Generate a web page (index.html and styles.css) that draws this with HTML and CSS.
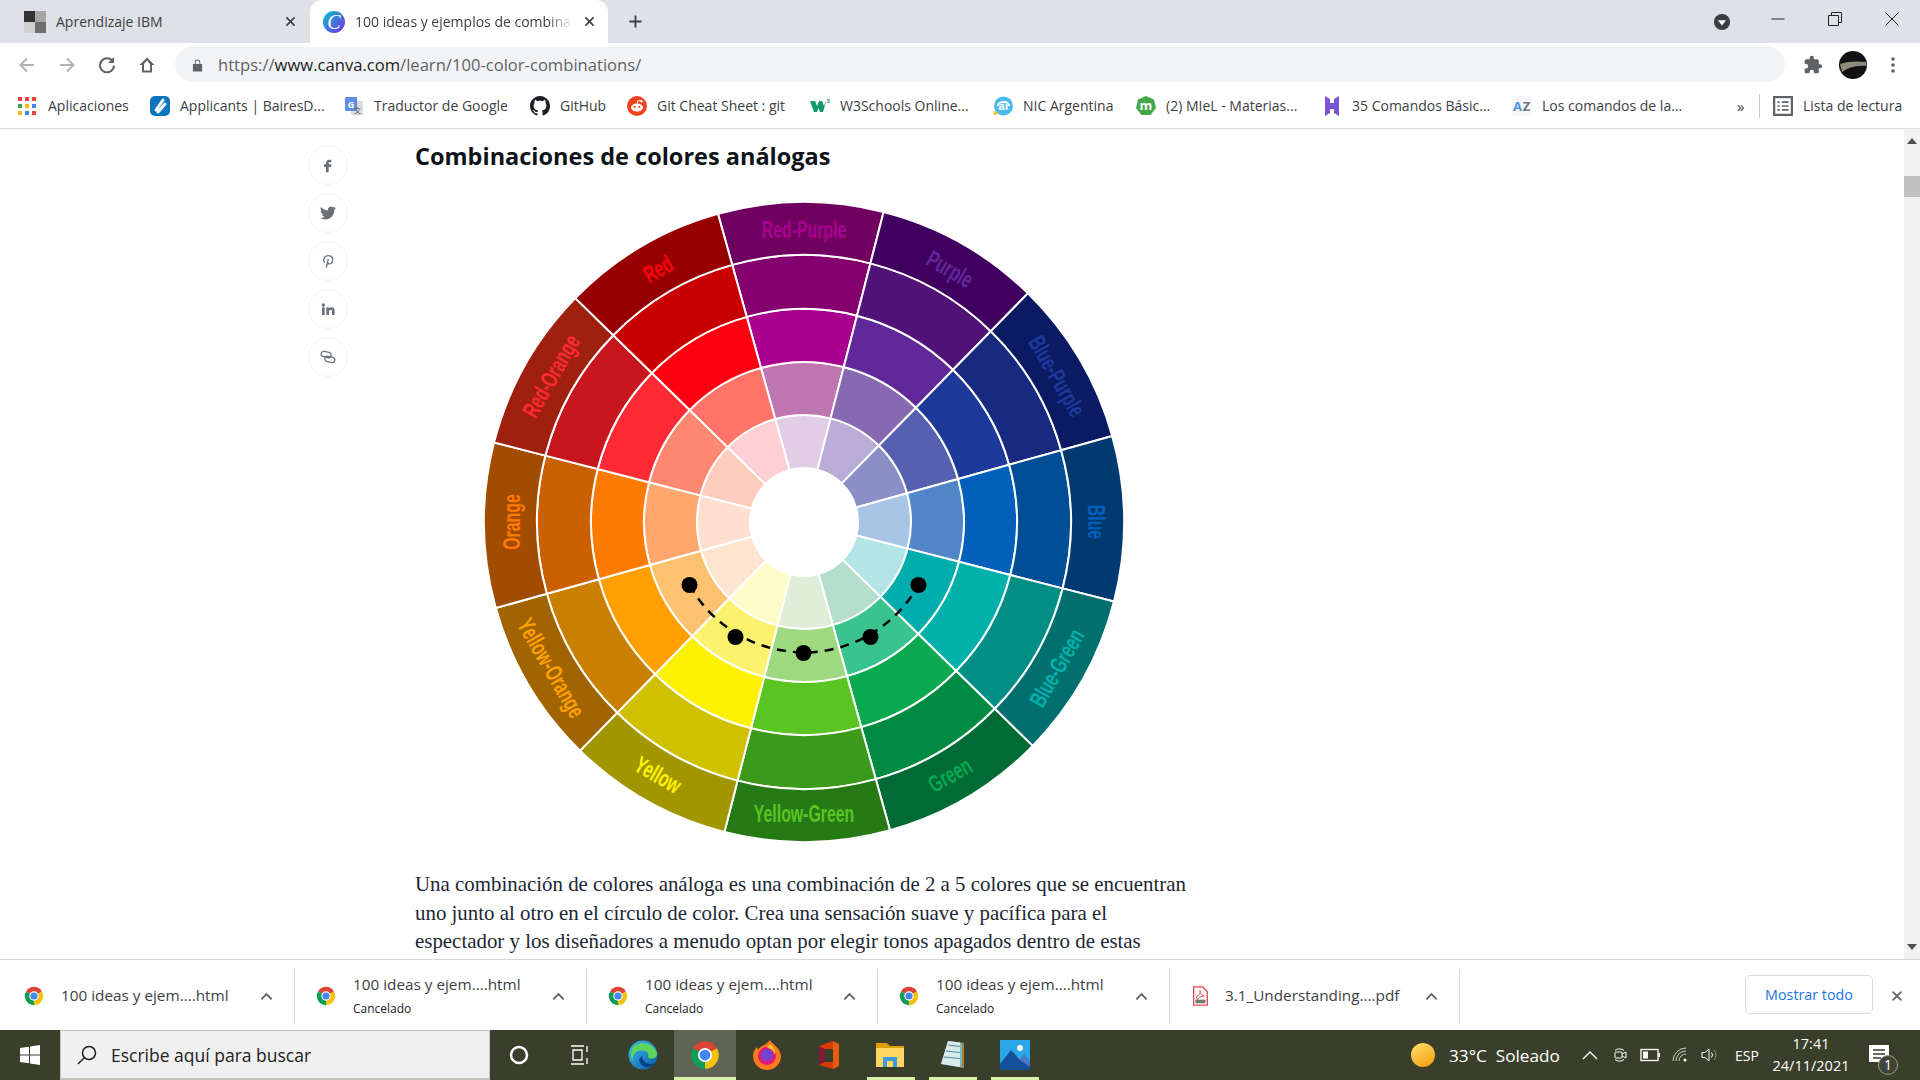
FILE: index.html
```html
<!DOCTYPE html>
<html lang="es">

<head>
	<meta charset="utf-8">
	<meta name="viewport" content="width=device-width, initial-scale=1.0">
	<title>100 ideas y ejemplos de combinaciones de colores</title>
	<link rel="stylesheet" href="styles.css">
</head>

<body>
	<svg class="defs" width="0" height="0">
		<symbol id="chrome" viewBox="0 0 24 24">
			<path fill="#db4437" d="M12 12L2.47 6.5A11 11 0 0 1 21.53 6.5Z" />
			<path fill="#f4c20d" d="M12 12L21.53 6.5A11 11 0 0 1 12 23Z" />
			<path fill="#0f9d58" d="M12 12L12 23A11 11 0 0 1 2.47 6.5Z" />
			<circle cx="12" cy="12" r="5.6" fill="#fff" />
			<circle cx="12" cy="12" r="4.3" fill="#4285f4" />
		</symbol>
		<symbol id="chev" viewBox="0 0 16 16">
			<path d="M2.5 11L8 5.5L13.5 11" fill="none" stroke="#5f6368" stroke-width="2" />
		</symbol>
		<symbol id="cross" viewBox="0 0 16 16">
			<path d="M3 3L13 13M13 3L3 13" fill="none" stroke="#3c4043" stroke-width="2" />
		</symbol>
	</svg>

	<header>
		<div class="tabstrip">
			<div class="tab">
				<svg class="favicon" viewBox="0 0 22 22">
					<rect width="11" height="11" fill="#333" />
					<rect x="11" width="11" height="11" fill="#a5a5a5" />
					<rect y="11" width="11" height="11" fill="#d0d0d0" />
					<rect x="11" y="11" width="11" height="11" fill="#6e6e6e" />
				</svg>
				<span class="tab_title">Aprendizaje IBM</span>
				<svg class="tab_close" viewBox="0 0 16 16"><use href="#cross" /></svg>
			</div>
			<div class="tab active">
				<svg class="favicon" viewBox="0 0 22 22">
					<defs>
						<linearGradient id="canva" x1="0" y1="0" x2="1" y2="1">
							<stop offset="0" stop-color="#00c4cc" />
							<stop offset="1" stop-color="#7d2ae8" />
						</linearGradient>
					</defs>
					<circle cx="11" cy="11" r="11" fill="url(#canva)" />
					<text class="canva_c" x="11" y="17.5">C</text>
				</svg>
				<span class="tab_title">100 ideas y ejemplos de combina</span>
				<svg class="tab_close" viewBox="0 0 16 16"><use href="#cross" /></svg>
			</div>
			<svg class="new_tab" viewBox="0 0 16 16">
				<path d="M8 1.5V14.5M1.5 8H14.5" stroke="#3c4043" stroke-width="2" />
			</svg>
			<svg class="tab_search" viewBox="0 0 20 20">
				<circle cx="10" cy="10" r="9" fill="#3c4043" />
				<path d="M5.5 8H14.5L10 14Z" fill="#fff" />
			</svg>
			<div class="winbtn">
				<svg viewBox="0 0 14 14"><path d="M0.5 7H13.5" stroke="#222" /></svg>
			</div>
			<div class="winbtn">
				<svg viewBox="0 0 14 14">
					<path d="M0.5 3.5H10.5V13.5H0.5ZM3.5 3.5V0.5H13.5V10.5H10.5" fill="none" stroke="#222" />
				</svg>
			</div>
			<div class="winbtn">
				<svg viewBox="0 0 14 14"><path d="M0.5 0.5L13.5 13.5M13.5 0.5L0.5 13.5" stroke="#222" /></svg>
			</div>
		</div>

		<div class="toolbar">
			<button class="toolbtn">
				<svg viewBox="0 0 20 20"><path d="M17 10H4M10 3.5L3.5 10L10 16.5" fill="none" stroke="#b0b3b8" stroke-width="2" /></svg>
			</button>
			<button class="toolbtn">
				<svg viewBox="0 0 20 20"><path d="M3 10H16M10 3.5L16.5 10L10 16.5" fill="none" stroke="#b0b3b8" stroke-width="2" /></svg>
			</button>
			<button class="toolbtn">
				<svg viewBox="0 0 20 20">
					<path d="M15.5 6A7 7 0 1 0 17 10.5" fill="none" stroke="#5f6368" stroke-width="2" />
					<path d="M17 2V8H11Z" fill="#5f6368" />
				</svg>
			</button>
			<button class="toolbtn">
				<svg viewBox="0 0 20 20"><path d="M10 2.5L2.5 10H5V17.5H15V10H17.5ZM7 15.5V9L10 5.5L13 9V15.5Z" fill="#5f6368" fill-rule="evenodd" /></svg>
			</button>
			<div class="omnibox">
				<svg class="lock" viewBox="0 0 12 14">
					<path d="M1 6H11V14H1ZM3 6V4A3 3 0 0 1 9 4V6" fill="#5f6368" />
					<path d="M4 6V4A2 2 0 0 1 8 4V6Z" fill="#f1f3f4" />
				</svg>
				<span class="url">https://<b>www.canva.com</b>/learn/100-color-combinations/</span>
			</div>
			<button class="toolbtn">
				<svg viewBox="0 0 24 24"><path fill="#5f6368" d="M20.5 11H19V7c0-1.1-.9-2-2-2h-4V3.5a2.5 2.5 0 0 0-5 0V5H4c-1.1 0-2 .9-2 2v3.8h1.5a2.7 2.7 0 0 1 0 5.4H2V20c0 1.1.9 2 2 2h3.8v-1.5a2.7 2.7 0 0 1 5.4 0V22H17c1.1 0 2-.9 2-2v-4h1.5a2.5 2.5 0 0 0 0-5z" /></svg>
			</button>
			<button class="toolbtn">
				<svg class="avatar" viewBox="0 0 28 28">
					<circle cx="14" cy="14" r="14" fill="#111" />
					<path d="M1 13C9 10 19 10 27 11L27.5 15C18 14 10 16 3 21Z" fill="#8f8c7c" />
				</svg>
			</button>
			<button class="toolbtn">
				<svg viewBox="0 0 20 20">
					<circle cx="10" cy="4" r="1.8" fill="#5f6368" />
					<circle cx="10" cy="10" r="1.8" fill="#5f6368" />
					<circle cx="10" cy="16" r="1.8" fill="#5f6368" />
				</svg>
			</button>
		</div>

		<nav class="bookmarks">
			<a class="bookmark">
				<svg viewBox="0 0 18 18">
					<rect width="4" height="4" fill="#ea4335" /><rect x="7" width="4" height="4" fill="#ea4335" /><rect x="14" width="4" height="4" fill="#ea4335" />
					<rect y="7" width="4" height="4" fill="#34a853" /><rect x="7" y="7" width="4" height="4" fill="#fbbc05" /><rect x="14" y="7" width="4" height="4" fill="#4285f4" />
					<rect y="14" width="4" height="4" fill="#fbbc05" /><rect x="7" y="14" width="4" height="4" fill="#4285f4" /><rect x="14" y="14" width="4" height="4" fill="#ea4335" />
				</svg>
				Aplicaciones
			</a>
			<a class="bookmark">
				<svg viewBox="0 0 20 20">
					<rect width="20" height="20" rx="5" fill="#0a75bd" />
					<path d="M6 14L13 4M8 16L15 8" stroke="#fff" stroke-width="3" stroke-linecap="round" />
				</svg>
				Applicants | BairesD...
			</a>
			<a class="bookmark">
				<svg viewBox="0 0 20 20">
					<rect x="7" y="5" width="12" height="14" fill="#d9dde3" />
					<rect x="1" y="1" width="12" height="14" rx="1" fill="#5d8fe6" />
					<text class="glyph_g" x="7" y="12">G</text>
					<text class="glyph_x" x="13.5" y="16.5">文</text>
				</svg>
				Traductor de Google
			</a>
			<a class="bookmark">
				<svg viewBox="0 0 16 16"><path fill="#1b1f23" d="M8 0C3.58 0 0 3.58 0 8c0 3.54 2.29 6.53 5.47 7.59.4.07.55-.17.55-.38 0-.19-.01-.82-.01-1.49-2.01.37-2.53-.49-2.69-.94-.09-.23-.48-.94-.82-1.13-.28-.15-.68-.52-.01-.53.63-.01 1.08.58 1.23.82.72 1.21 1.87.87 2.33.66.07-.52.28-.87.51-1.07-1.78-.2-3.64-.89-3.64-3.95 0-.87.31-1.59.82-2.15-.08-.2-.36-1.02.08-2.12 0 0 .67-.21 2.2.82.64-.18 1.32-.27 2-.27s1.36.09 2 .27c1.53-1.04 2.2-.82 2.2-.82.44 1.1.16 1.92.08 2.12.51.56.82 1.27.82 2.15 0 3.07-1.87 3.75-3.65 3.95.29.25.54.73.54 1.48 0 1.07-.01 1.93-.01 2.2 0 .21.15.46.55.38A8.01 8.01 0 0 0 16 8c0-4.42-3.58-8-8-8z" /></svg>
				GitHub
			</a>
			<a class="bookmark">
				<svg viewBox="0 0 20 20">
					<circle cx="10" cy="10" r="10" fill="#f0421c" />
					<ellipse cx="10" cy="11.5" rx="6" ry="4" fill="#fff" />
					<circle cx="7.7" cy="11" r="1.1" fill="#f0421c" />
					<circle cx="12.3" cy="11" r="1.1" fill="#f0421c" />
					<path d="M10 8L11 4.5L14 5.2" fill="none" stroke="#fff" />
					<circle cx="14.5" cy="5.2" r="1.2" fill="#fff" />
				</svg>
				Git Cheat Sheet : git
			</a>
			<a class="bookmark">
				<svg viewBox="0 0 20 20">
					<path d="M0 5H5L7 10L9 5H12L14 10L16 5V6L13 16H10L8.5 12L7 16H4Z" fill="#119a6b" />
					<text class="glyph_3" x="16.5" y="7">3</text>
				</svg>
				W3Schools Online...
			</a>
			<a class="bookmark">
				<svg viewBox="0 0 20 20">
					<circle cx="10.5" cy="10" r="9.5" fill="#4cb9ee" />
					<path d="M5 10A5.5 4 0 0 1 16 10" fill="none" stroke="#fff" stroke-width="2" />
					<text class="glyph_ar" x="11" y="14">ar</text>
					<circle cx="2.5" cy="17" r="2" fill="#f5c518" />
				</svg>
				NIC Argentina
			</a>
			<a class="bookmark">
				<svg viewBox="0 0 20 20">
					<path d="M10 0L18 3.5L20 12L14.5 19H5.5L0 12L2 3.5Z" fill="#45a848" />
					<text class="glyph_m" x="10" y="14">m</text>
				</svg>
				(2) MIeL - Materias...
			</a>
			<a class="bookmark">
				<svg viewBox="0 0 20 20">
					<path d="M3 0L8 3V7H12V3L17 0V20L12 17V13H8V17L3 20Z" fill="#7a55d8" />
				</svg>
				35 Comandos Básic...
			</a>
			<a class="bookmark">
				<svg viewBox="0 0 20 20">
					<rect width="20" height="20" fill="#f6f7f9" />
					<text class="glyph_a" x="5.5" y="15">A</text>
					<text class="glyph_z" x="14.5" y="15">Z</text>
				</svg>
				Los comandos de la...
			</a>
			<span class="more">»</span>
			<span class="bm_sep"></span>
			<a class="bookmark">
				<svg viewBox="0 0 18 18">
					<rect x="1" y="1" width="16" height="16" fill="none" stroke="#5f6368" stroke-width="2" />
					<path d="M4 5.5H6M8 5.5H14M4 9H6M8 9H14M4 12.5H6M8 12.5H14" stroke="#5f6368" stroke-width="1.5" />
				</svg>
				Lista de lectura
			</a>
		</nav>
	</header>

	<main>
		<div class="page">
			<aside class="share">
				<a class="share_btn"><svg viewBox="0 0 24 24"><path d="M14 8h3V4h-3c-3 0-5 2-5 5v2H6v4h3v8h4v-8h3.5l.5-4h-4V9c0-.6.4-1 1-1z" /></svg></a>
				<a class="share_btn"><svg viewBox="0 0 24 24"><path d="M23.95 4.57a10 10 0 0 1-2.82.77 4.96 4.96 0 0 0 2.16-2.72c-.95.55-2 .95-3.12 1.18a4.92 4.92 0 0 0-8.38 4.48C7.69 8.1 4.07 6.13 1.64 3.16a4.82 4.82 0 0 0-.67 2.47c0 1.71.87 3.21 2.19 4.1a4.9 4.9 0 0 1-2.23-.61v.06a4.92 4.92 0 0 0 3.95 4.83 5 5 0 0 1-2.21.08 4.94 4.94 0 0 0 4.6 3.42A9.87 9.87 0 0 1 0 19.54a13.94 13.94 0 0 0 7.55 2.21c9.05 0 14-7.5 14-13.98 0-.21 0-.42-.02-.63a9.94 9.94 0 0 0 2.46-2.55z" /></svg></a>
				<a class="share_btn"><svg viewBox="0 0 24 24"><path class="line" d="M9.5 22L12.5 9M7 14.5C4 11 6 4 12.5 4S20 9 18.5 13C17 17 12.5 17 11 14.5" /></svg></a>
				<a class="share_btn"><svg viewBox="0 0 24 24"><path d="M4.98 3.5a2.5 2.5 0 1 1 0 5 2.5 2.5 0 0 1 0-5zM3 9.5h4V21H3zM9.5 9.5h3.8v1.6c.6-1 1.9-1.9 3.8-1.9 4 0 4.9 2.6 4.9 6V21h-4v-5c0-1.3 0-3-1.8-3s-2.7 1.4-2.7 2.9V21h-4z" /></svg></a>
				<a class="share_btn"><svg viewBox="0 0 24 24">
					<g transform="rotate(12 12 12)">
						<rect class="line" x="1" y="5" width="15" height="8" rx="4" />
						<rect class="line" x="8" y="11" width="15" height="8" rx="4" />
					</g>
				</svg></a>
			</aside>

			<article>
				<h2>Combinaciones de colores análogas</h2>
				<svg id="wheel" class="wheel" viewBox="0 0 640 640"></svg>
				<p>Una combinación de colores análoga es una combinación de 2 a 5 colores que se encuentran<br>
					uno junto al otro en el círculo de color. Crea una sensación suave y pacífica para el<br>
					espectador y los diseñadores a menudo optan por elegir tonos apagados dentro de estas</p>
			</article>
		</div>

		<div class="scrollbar">
			<span class="arrow_up"></span>
			<span class="thumb"></span>
			<span class="arrow_down"></span>
		</div>
	</main>

	<section class="downloads">
		<div class="dl_items">
			<div class="dl_item first">
				<svg class="dl_icon"><use href="#chrome" /></svg>
				<div class="dl_text"><span>100 ideas y ejem....html</span></div>
				<svg class="dl_chev"><use href="#chev" /></svg>
			</div>
			<div class="dl_item">
				<svg class="dl_icon"><use href="#chrome" /></svg>
				<div class="dl_text"><span>100 ideas y ejem....html</span><small>Cancelado</small></div>
				<svg class="dl_chev"><use href="#chev" /></svg>
			</div>
			<div class="dl_item">
				<svg class="dl_icon"><use href="#chrome" /></svg>
				<div class="dl_text"><span>100 ideas y ejem....html</span><small>Cancelado</small></div>
				<svg class="dl_chev"><use href="#chev" /></svg>
			</div>
			<div class="dl_item">
				<svg class="dl_icon"><use href="#chrome" /></svg>
				<div class="dl_text"><span>100 ideas y ejem....html</span><small>Cancelado</small></div>
				<svg class="dl_chev"><use href="#chev" /></svg>
			</div>
			<div class="dl_item">
				<svg class="dl_icon pdf" viewBox="0 0 20 22">
					<path d="M3 1H13L18 6V21H3Z" fill="#fff" stroke="#e5484d" stroke-width="1.5" />
					<path d="M6 12C9 11 11 7 10 5C9.5 7 11 10 15 11C11 11 8 13 7 15Z" fill="none" stroke="#e5484d" />
					<rect x="5" y="15" width="11" height="4" fill="#777" />
				</svg>
				<div class="dl_text"><span>3.1_Understanding....pdf</span></div>
				<svg class="dl_chev"><use href="#chev" /></svg>
			</div>
		</div>
		<button class="show_all">Mostrar todo</button>
		<svg class="dl_close" viewBox="0 0 16 16">
			<path d="M3 3L13 13M13 3L3 13" fill="none" stroke="#5f6368" stroke-width="2" />
		</svg>
	</section>

	<footer class="taskbar">
		<div class="start">
			<svg viewBox="0 0 20 20">
				<path d="M0 3L9 1.7V9.5H0ZM10 1.5L20 0V9.5H10ZM0 10.5H9V18.3L0 17ZM10 10.5H20V20L10 18.5Z" fill="#fff" />
			</svg>
		</div>
		<div class="search">
			<svg viewBox="0 0 20 20">
				<circle cx="12" cy="8" r="6.5" fill="none" stroke="#222" stroke-width="1.5" />
				<path d="M7.5 12.5L1 19" stroke="#222" stroke-width="1.5" />
			</svg>
			Escribe aquí para buscar
		</div>

		<div class="tb_btn narrow">
			<svg viewBox="0 0 20 20"><circle cx="10" cy="10" r="8" fill="none" stroke="#fff" stroke-width="2.5" /></svg>
		</div>
		<div class="tb_btn wide">
			<svg viewBox="0 0 20 20">
				<path d="M1 1H14M1 19H14M3 5H12V15H3ZM17 1V7M17 13V19" fill="none" stroke="#fff" stroke-width="1.3" />
			</svg>
		</div>
		<div class="tb_btn">
			<svg class="big" viewBox="0 0 30 30">
				<defs>
					<linearGradient id="edge" x1="0" y1="0" x2="1" y2="1">
						<stop offset="0" stop-color="#35c1f1" />
						<stop offset="1" stop-color="#0c59a4" />
					</linearGradient>
				</defs>
				<circle cx="15" cy="15" r="14.5" fill="url(#edge)" />
				<path d="M4 9C8 1 24 0 29 13C30 19 22 20 20 17C22 12 15 9 10 11C6 13 4 17 5 21C2 18 3 12 4 9Z" fill="#5fd35f" />
				<path d="M14 16C14 22 21 26 27 23C22 30 12 28 11 19Z" fill="#0b3f87" />
			</svg>
		</div>
		<div class="tb_btn running current">
			<svg class="big"><use href="#chrome" /></svg>
		</div>
		<div class="tb_btn">
			<svg class="big" viewBox="0 0 30 30">
				<path d="M18 0C20 4 28 7 29 16A14 14 0 0 1 1 16C1 12 3 9 5 7L6 10C9 5 15 5 18 0Z" fill="#ff7a1a" />
				<circle cx="15" cy="16" r="9" fill="#e3177a" />
				<circle cx="15" cy="15" r="6" fill="#7443cc" />
				<path d="M18 4C22 7 24 11 23 15C21 9 17 8 15 8Z" fill="#ffc22e" />
			</svg>
		</div>
		<div class="tb_btn">
			<svg class="big" viewBox="0 0 30 30">
				<path d="M5 6L19 1V29L5 25Z" fill="#d83b01" />
				<path d="M19 1L25 4V26L19 29Z" fill="#e85d12" />
				<path d="M5 6L11 9V22L5 25Z" fill="#7f1c3a" />
				<path d="M11 9H19V22H11Z" fill="#393f2a" />
			</svg>
		</div>
		<div class="tb_btn running">
			<svg class="big" viewBox="0 0 30 30">
				<path d="M0 3H11L14 6H28V25H0Z" fill="#e0a100" />
				<path d="M0 8H28V27H0Z" fill="#ffd75e" />
				<path d="M7 27V17H21V27H17V21H11V27Z" fill="#3d9ae2" />
			</svg>
		</div>
		<div class="tb_btn running">
			<svg class="big" viewBox="0 0 30 30">
				<path d="M10 1L26 3L26 28L3 24Z" fill="#7fb6bb" />
				<path d="M10 1L22 2.5L22 27L3 24Z" fill="#d8eaec" />
				<path d="M10 5L22 6.5M8 11L22 12.5M6 17L22 18.5" stroke="#4a8c93" />
				<path d="M24 3H26V28H24Z" fill="#a6803a" />
			</svg>
		</div>
		<div class="tb_btn running">
			<svg class="big" viewBox="0 0 30 30">
				<rect width="30" height="30" fill="#2aa7ea" />
				<path d="M0 24L11 10L20 20L24 15L30 21V30H0Z" fill="#14509a" />
				<path d="M20 20L24 15L30 21V27Z" fill="#4b77c8" />
				<circle cx="20" cy="8" r="3" fill="#fff" />
			</svg>
		</div>

		<div class="tray">
			<span class="sun"></span>
			<span class="weather">33°C&nbsp; Soleado</span>
			<svg viewBox="0 0 16 16"><path d="M1 12L8 5L15 12" fill="none" stroke="#fff" stroke-width="1.3" /></svg>
			<svg viewBox="0 0 16 16">
				<path d="M3 3.5A7 7 0 0 1 12 3.5M3 12.5A7 7 0 0 0 12 12.500" fill="none" stroke="#fff" />
				<rect x="3" y="5" width="7" height="6" rx="1" fill="none" stroke="#fff" />
				<path d="M10 7L14 5V11L10 9" fill="none" stroke="#fff" />
			</svg>
			<svg viewBox="0 0 20 16">
				<rect x="1" y="2.5" width="17" height="11" fill="none" stroke="#fff" stroke-width="1.3" />
				<rect x="3" y="4.5" width="5" height="7" fill="#fff" />
				<rect x="18.5" y="6" width="1.5" height="4" fill="#fff" />
			</svg>
			<svg viewBox="0 0 16 16">
				<path d="M1 14A13 13 0 0 1 14 1M4 14A10 10 0 0 1 14 4M7 14A7 7 0 0 1 14 7" fill="none" stroke="#cfd1c9" />
				<circle cx="13" cy="13" r="1.5" fill="#fff" />
			</svg>
			<svg viewBox="0 0 16 16">
				<path d="M1 5.5H4L8 2V14L4 10.5H1Z" fill="none" stroke="#fff" />
				<path d="M10.5 5.5A4 4 0 0 1 10.5 10.5" fill="none" stroke="#fff" />
				<path d="M13 3A8 8 0 0 1 13 13" fill="none" stroke="#8b8e80" />
			</svg>
			<span class="lang">ESP</span>
			<span class="clock">17:41<br>24/11/2021</span>
			<span class="notif">
				<svg viewBox="0 0 20 20">
					<path d="M0 0H20V17H0Z" fill="#fff" />
					<path d="M4 5H16M4 9H16M4 13H12" stroke="#393f2a" stroke-width="1.3" />
				</svg>
				<span class="badge">1</span>
			</span>
		</div>
	</footer>

	<script src="wheel.js"></script>
</body>

</html>
```

FILE: styles.css
```css
* {
	margin: 0;
	box-sizing: border-box;
}

html,
body {
	width: 1920px;
	height: 1080px;
	overflow: hidden;
}

body {
	display: flex;
	flex-direction: column;
	font-family: "Open Sans", "Noto Sans", sans-serif;
	color: #3c4043;
	background: #fff;
}

.defs {
	position: absolute;
}

svg {
	display: block;
	flex: none;
}

button {
	border: 0;
	background: none;
	padding: 0;
	font-family: inherit;
}

/* tabs */
.tabstrip {
	height: 43px;
	background: #dee1e6;
	display: flex;
	align-items: center;
}

.tab {
	height: 43px;
	width: 310px;
	padding: 0 13px 0 24px;
	display: flex;
	align-items: center;
	font-size: 14px;
}

.tab .favicon {
	width: 22px;
	height: 22px;
	margin-right: 10px;
}

.tab_title {
	flex: 1;
	overflow: hidden;
	white-space: nowrap;
}

.tab_close {
	width: 13px;
	height: 13px;
	margin-left: 10px;
}

.tab.active {
	width: 298px;
	padding: 0 12px 0 13px;
	background: #fff;
	border-radius: 12px 12px 0 0;
}

.tab.active .tab_title {
	-webkit-mask-image: linear-gradient(to right, #000 88%, transparent);
	mask-image: linear-gradient(to right, #000 88%, transparent);
}

.canva_c {
	font: italic 20px "Liberation Serif", serif;
	fill: #fff;
	text-anchor: middle;
}

.new_tab {
	width: 15px;
	height: 15px;
	margin-left: 20px;
}

.tab_search {
	width: 18px;
	height: 18px;
	margin-left: auto;
	margin-right: 18px;
}

.winbtn {
	width: 57px;
	height: 43px;
	padding-bottom: 6px;
	display: flex;
	align-items: center;
	justify-content: center;
}

.winbtn svg {
	width: 14px;
	height: 14px;
}

/* toolbar */
.toolbar {
	height: 43px;
	padding: 0 7px;
	display: flex;
	align-items: center;
}

.toolbtn {
	width: 40px;
	height: 36px;
	display: flex;
	align-items: center;
	justify-content: center;
	flex: none;
}

.toolbtn svg {
	width: 20px;
	height: 20px;
}

.toolbtn .avatar {
	width: 28px;
	height: 28px;
}

.omnibox {
	flex: 1;
	height: 35px;
	margin: 0 8px;
	padding-left: 17px;
	border-radius: 18px;
	background: #f1f3f4;
	display: flex;
	align-items: center;
}

.lock {
	width: 11px;
	height: 14px;
	margin-right: 15px;
}

.url {
	font-size: 16.6px;
	color: #5f6368;
}

.url b {
	font-weight: 400;
	color: #202124;
}

/* bookmarks */
.bookmarks {
	height: 43px;
	padding: 0 0 3px 18px;
	border-bottom: 1px solid #dadce0;
	display: grid;
	grid-template-columns: 132px 194px 186px 97px 183px 183px 143px 186px 190px 225px 22px 14px 1fr;
	align-items: center;
	font-size: 14px;
	white-space: nowrap;
}

.bookmark {
	display: flex;
	align-items: center;
	gap: 10px;
}

.bookmark svg {
	width: 20px;
	height: 20px;
}

.bookmark:first-child {
	gap: 12px;
}

.bookmark:first-child svg {
	width: 18px;
	height: 18px;
}

.more {
	font-size: 15px;
}

.bm_sep {
	width: 1px;
	height: 24px;
	background: #c8cacd;
}

.glyph_g {
	font: bold 9px "Open Sans", sans-serif;
	fill: #fff;
	text-anchor: middle;
}

.glyph_x {
	font: 7px "Noto Sans CJK SC", sans-serif;
	fill: #555;
	text-anchor: middle;
}

.glyph_3 {
	font: bold 6px "Open Sans", sans-serif;
	fill: #119a6b;
}

.glyph_ar {
	font: bold 11px "Open Sans", sans-serif;
	fill: #fff;
	text-anchor: middle;
}

.glyph_m {
	font: bold 13px "Open Sans", sans-serif;
	fill: #fff;
	text-anchor: middle;
}

.glyph_a {
	font: bold 13px "Open Sans", sans-serif;
	fill: #4d94ee;
	text-anchor: middle;
}

.glyph_z {
	font: bold 13px "Open Sans", sans-serif;
	fill: #6b7480;
	text-anchor: middle;
}

/* page */
main {
	height: 830px;
	display: flex;
	overflow: hidden;
}

.page {
	flex: 1;
	display: flex;
	padding-left: 308px;
	gap: 67px;
}

.share {
	width: 40px;
	padding-top: 16px;
	display: flex;
	flex-direction: column;
	gap: 8px;
}

.share_btn {
	width: 40px;
	height: 40px;
	border: 1px solid #f1f1f3;
	border-radius: 50%;
	display: flex;
	align-items: center;
	justify-content: center;
}

.share_btn svg {
	width: 16px;
	height: 16px;
	fill: #6b7178;
}

.share_btn .line {
	fill: none;
	stroke: #6b7178;
	stroke-width: 2;
}

article {
	width: 777px;
	padding-top: 11px;
}

h2 {
	font-size: 23.5px;
	line-height: 33px;
	font-weight: 700;
	color: #0e1318;
}

.wheel {
	width: 640px;
	height: 640px;
	margin: 29px auto 28px;
	overflow: visible;
}

.wheel_label {
	font: bold 24px "Liberation Sans", sans-serif;
	text-anchor: middle;
	dominant-baseline: central;
}

p {
	font-family: "Liberation Serif", serif;
	font-size: 20.9px;
	line-height: 28.7px;
	color: #1b2733;
	white-space: nowrap;
}

.scrollbar {
	width: 16px;
	background: #f1f1f1;
	display: flex;
	flex-direction: column;
	align-items: center;
}

.arrow_up {
	margin-top: 9px;
	border: 5px solid transparent;
	border-top: 0;
	border-bottom: 6px solid #505050;
}

.thumb {
	width: 16px;
	height: 21px;
	margin-top: 32px;
	background: #c1c1c1;
}

.arrow_down {
	margin-top: auto;
	margin-bottom: 9px;
	border: 5px solid transparent;
	border-bottom: 0;
	border-top: 6px solid #505050;
}

/* downloads bar */
.downloads {
	height: 71px;
	padding: 9px 16px 7px 0;
	border-top: 1px solid #d5d6d8;
	display: flex;
	align-items: center;
}

.dl_items {
	height: 55px;
	display: grid;
	grid-template-columns: 295px 292px 291px 292px 290px;
}

.dl_item {
	display: flex;
	align-items: center;
	padding: 0 20px 0 21px;
	border-right: 1px solid #d5d6d8;
	font-size: 15.3px;
}

.dl_item.first {
	padding-left: 24px;
}

.dl_icon {
	width: 20px;
	height: 20px;
	margin-right: 17px;
}

.dl_icon.pdf {
	margin: 0 15px 0 -1px;
}

.dl_text {
	display: flex;
	flex-direction: column;
	gap: 6px;
	padding-bottom: 2px;
	white-space: nowrap;
}

.dl_text small {
	font-size: 12px;
	color: #202124;
}

.dl_chev {
	width: 15px;
	height: 15px;
	margin-left: auto;
}

.show_all {
	width: 128px;
	height: 39px;
	margin: 0 0 4px auto;
	border: 1px solid #dadce0;
	border-radius: 5px;
	color: #1a73e8;
	font-size: 14.3px;
	font-weight: 500;
}

.dl_close {
	width: 14px;
	height: 14px;
	margin-left: 17px;
}

/* taskbar */
.taskbar {
	height: 50px;
	background: #393f2a;
	display: flex;
	color: #fff;
}

.start {
	width: 60px;
	display: flex;
	align-items: center;
	justify-content: center;
}

.start svg {
	width: 20px;
	height: 20px;
}

.search {
	width: 430px;
	padding-left: 16px;
	gap: 14px;
	background: #f0f0f0;
	border: 1px solid #c4c5bf;
	border-bottom-width: 2px;
	color: #222;
	font-size: 17.5px;
	display: flex;
	align-items: center;
}

.search svg {
	width: 20px;
	height: 20px;
}

.tb_btn {
	width: 62px;
	display: flex;
	align-items: center;
	justify-content: center;
	position: relative;
}

.tb_btn.narrow {
	width: 58px;
}

.tb_btn.wide {
	width: 64px;
}

.tb_btn svg {
	width: 20px;
	height: 20px;
}

.tb_btn .big {
	width: 30px;
	height: 30px;
}

.tb_btn.running::after {
	content: "";
	position: absolute;
	left: 7px;
	right: 7px;
	bottom: 0;
	height: 3px;
	background: #d4f2a8;
}

.tb_btn.current {
	background: #5f6455;
}

.tb_btn.current::after {
	left: 0;
	right: 0;
}

.tray {
	margin-left: auto;
	width: 512px;
	display: grid;
	grid-template-columns: 41px 126px 29px 31px 29px 31px 27px 50px 78px 62px 8px;
	align-items: center;
	justify-items: center;
	font-size: 15.5px;
}

.tray svg {
	width: 16px;
	height: 16px;
}

.tray svg[viewBox="0 0 20 16"] {
	width: 20px;
}

.sun {
	width: 24px;
	height: 24px;
	margin-left: 3px;
	justify-self: start;
	border-radius: 50%;
	background: linear-gradient(150deg, #ffe169, #f59a0a);
}

.weather {
	justify-self: start;
	font-size: 17.2px;
	white-space: nowrap;
}

.lang {
	font-size: 14px;
}

.clock {
	font-size: 14.5px;
	line-height: 22px;
	text-align: center;
	white-space: nowrap;
}

.notif {
	position: relative;
	width: 20px;
	height: 20px;
	margin-left: -4px;
}

.tray .notif svg {
	width: 20px;
	height: 20px;
}

.badge {
	position: absolute;
	left: 9px;
	top: 10px;
	width: 20px;
	height: 20px;
	border-radius: 50%;
	border: 1px solid #9a9c93;
	background: #3f4436;
	font-size: 14px;
	line-height: 18px;
	text-align: center;
}
```

FILE: wheel.js
```js
//farver pr. felt, fra inderste til yderste ring, med uret fra toppen
const segments = [
	{ name: "Red-Purple", colors: ["#e2cde7", "#be76b1", "#aa0090", "#85006f", "#6f0060"] },
	{ name: "Purple", colors: ["#b9acd8", "#8769b2", "#61289a", "#511378", "#3f0060"], rot: 30 },
	{ name: "Blue-Purple", colors: ["#8a90c6", "#5660b0", "#1d3a9a", "#172a80", "#0a1a63"], rot: 60 },
	{ name: "Blue", colors: ["#a9c5e6", "#5186c8", "#0060bb", "#004e96", "#003a70"], rot: 90 },
	{ name: "Blue-Green", colors: ["#b3e5e6", "#00adad", "#00b0ab", "#008e86", "#006f6e"], rot: -60 },
	{ name: "Green", colors: ["#b5dfcc", "#39c48d", "#0aa84f", "#008a42", "#006b35"], rot: -30 },
	{ name: "Yellow-Green", colors: ["#dfeed8", "#9fd97f", "#5ac422", "#3c9a1a", "#267a16"], rot: 0 },
	{ name: "Yellow", colors: ["#fffcc8", "#fcf26e", "#fff200", "#cfc000", "#a29600"], rot: 30 },
	{ name: "Yellow-Orange", colors: ["#ffe4d0", "#fdc26f", "#ffa000", "#c97f00", "#a06400"], rot: 60 },
	{ name: "Orange", colors: ["#fedfd0", "#ffa76e", "#ff7a00", "#ca6000", "#a14c00"], rot: -90 },
	{ name: "Red-Orange", colors: ["#ffccbe", "#ff8870", "#ff2a33", "#c8161f", "#a0200f"], rot: -60 },
	{ name: "Red", colors: ["#fdd0d4", "#ff7468", "#ff0010", "#c80000", "#960000"], rot: -30 }
];

const radii = [54, 107, 160, 213, 267, 320];
const cx = 320;
const cy = 320;
//hjulet hælder en anelse mod uret i billedet
const tilt = -0.6;
const dots = [[205.5, 383], [251.5, 435], [319.5, 451], [386.5, 435], [434.5, 383]];

function point(r, deg) {
	const a = deg * Math.PI / 180;
	return (cx + r * Math.sin(a)).toFixed(2) + " " + (cy - r * Math.cos(a)).toFixed(2);
}

function sector(r1, r2, from, to) {
	return `M${point(r1, from)}L${point(r2, from)}A${r2} ${r2} 0 0 1 ${point(r2, to)}L${point(r1, to)}A${r1} ${r1} 0 0 0 ${point(r1, from)}Z`;
}

let out = "";

segments.forEach((seg, i) => {
	const mid = i * 30 + tilt;
	seg.colors.forEach((color, ring) => {
		out += `<path d="${sector(radii[ring], radii[ring + 1], mid - 15, mid + 15)}" fill="${color}" stroke="#fff" stroke-width="2"/>`;
	});
});

segments.forEach((seg, i) => {
	const pos = point(292, i * 30);
	out += `<text class="wheel_label" transform="translate(${pos}) rotate(${seg.rot || 0}) scale(.66 1)" fill="${seg.colors[2]}">${seg.name}</text>`;
});

out += `<path d="M${dots[0].join(" ")}A131 131 0 0 0 ${dots[4].join(" ")}" fill="none" stroke="#000" stroke-width="2.5" stroke-dasharray="9 7"/>`;

dots.forEach(d => {
	out += `<circle cx="${d[0]}" cy="${d[1]}" r="8" fill="#000"/>`;
});

document.getElementById("wheel").innerHTML = out;
```
